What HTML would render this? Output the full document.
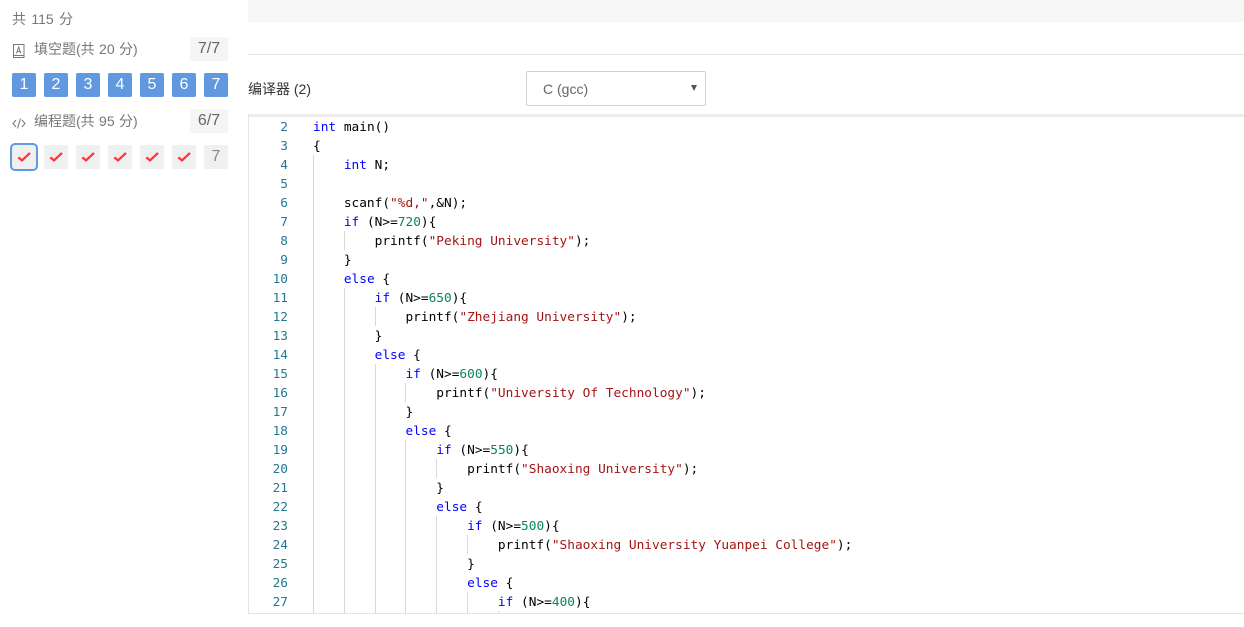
<!DOCTYPE html>
<html lang="zh"><head><meta charset="utf-8"><title>编程题</title>
<style>
html,body{margin:0;padding:0;background:#fff}
body{position:relative;width:1244px;height:627px;overflow:hidden;font-family:"Liberation Sans","Noto Sans CJK SC",sans-serif;font-size:14px;color:#777}
.a{position:absolute}
.t{position:absolute;white-space:nowrap;line-height:20px}
.chip{position:absolute;left:190px;width:38px;height:24px;background:#f5f5f5;border-radius:2px;text-align:center;line-height:24px;font-size:16px;color:#666}
.tile{position:absolute;width:24px;height:24px;border-radius:2px;text-align:center;line-height:24px;font-size:16px}
.b{background:#6199e0;color:#fff;top:73px}
.g{background:#f0f0f0;color:#888;top:145px}
.tile svg{position:absolute;left:5px;top:5px}
.guide{position:absolute;width:1px;background:#d8d8d8}
.ln{position:absolute;left:250px;width:38px;margin-top:1px;text-align:right;height:19px;font:12.8px/19px "DejaVu Sans Mono",monospace;color:#237893}
.c{position:absolute;left:313px;margin-top:1px;white-space:pre;font:12.8px/19px "DejaVu Sans Mono",monospace;color:#000}
.k{color:#00f}.s{color:#a31515}.n{color:#098658}
</style></head><body>
<div class="t" style="left:12px;top:9px;word-spacing:1.5px">共 115 分</div>

<svg class="a" style="left:12px;top:43px" width="14" height="16" viewBox="0 0 14 16" fill="none" stroke="#777" stroke-width="1"><path d="M1.500 1.500h10.500v13h-10.500z"/><path d="M1.500 12.500h10.500"/><path d="M4.500 10.500l2.200-6.500l2.200 6.500M5.300 8.500h2.800"/></svg>
<div class="t" style="left:34px;top:39px;word-spacing:.5px">填空题(共 20 分)</div>
<div class="chip" style="top:37px">7/7</div>

<div class="tile b" style="left:12px">1</div>
<div class="tile b" style="left:44px">2</div>
<div class="tile b" style="left:76px">3</div>
<div class="tile b" style="left:108px">4</div>
<div class="tile b" style="left:140px">5</div>
<div class="tile b" style="left:172px">6</div>
<div class="tile b" style="left:204px">7</div>

<svg class="a" style="left:12px;top:116px" width="14" height="14" viewBox="0 0 14 14" fill="none" stroke="#777" stroke-width="1"><path d="M4 4L1 7.500l3 3.500M10 4l3 3.500l-3 3.500M8.500 2.500L5.500 12.500"/></svg>
<div class="t" style="left:34px;top:111px;word-spacing:.5px">编程题(共 95 分)</div>
<div class="chip" style="top:109px">6/7</div>

<div class="tile g" style="left:12px;box-shadow:0 0 0 2px #6199e0;border-radius:3px"><svg width="14" height="14" viewBox="0 0 14 14" fill="none" stroke="#f33" stroke-width="2.200"><path d="M1.300 7.300L5 10.400L13 2.900"/></svg></div>
<div class="tile g" style="left:44px"><svg width="14" height="14" viewBox="0 0 14 14" fill="none" stroke="#f33" stroke-width="2.200"><path d="M1.300 7.300L5 10.400L13 2.900"/></svg></div>
<div class="tile g" style="left:76px"><svg width="14" height="14" viewBox="0 0 14 14" fill="none" stroke="#f33" stroke-width="2.200"><path d="M1.300 7.300L5 10.400L13 2.900"/></svg></div>
<div class="tile g" style="left:108px"><svg width="14" height="14" viewBox="0 0 14 14" fill="none" stroke="#f33" stroke-width="2.200"><path d="M1.300 7.300L5 10.400L13 2.900"/></svg></div>
<div class="tile g" style="left:140px"><svg width="14" height="14" viewBox="0 0 14 14" fill="none" stroke="#f33" stroke-width="2.200"><path d="M1.300 7.300L5 10.400L13 2.900"/></svg></div>
<div class="tile g" style="left:172px"><svg width="14" height="14" viewBox="0 0 14 14" fill="none" stroke="#f33" stroke-width="2.200"><path d="M1.300 7.300L5 10.400L13 2.900"/></svg></div>
<div class="tile g" style="left:204px">7</div>

<div class="a" style="left:248px;top:0;width:996px;height:22px;background:#f7f7f7"></div>
<div class="a" style="left:248px;top:54px;width:996px;height:1px;background:#e4e4e4"></div>
<div class="t" style="left:248px;top:79px;color:#333">编译器 (2)</div>
<div class="a" style="left:526px;top:71px;width:178px;height:33px;border:1px solid #ccd0d8;border-radius:2px"></div>
<div class="t" style="left:543px;top:79px;color:#666">C (gcc)</div>
<div class="a" style="left:691px;top:85px;width:0;height:0;border-left:3.500px solid transparent;border-right:3.500px solid transparent;border-top:6px solid #555"></div>

<div class="a" style="left:248px;top:114px;width:996px;height:3px;background:#ececec"></div>
<div class="a" style="left:248px;top:114px;width:1px;height:500px;background:#e4e4e4"></div>
<div class="a" style="left:248px;top:613px;width:996px;height:1px;background:#e4e4e4"></div>

<div class="guide" style="left:313px;top:155px;height:458px"></div>
<div class="guide" style="left:344px;top:231px;height:19px"></div>
<div class="guide" style="left:344px;top:288px;height:325px"></div>
<div class="guide" style="left:375px;top:307px;height:19px"></div>
<div class="guide" style="left:375px;top:364px;height:249px"></div>
<div class="guide" style="left:405px;top:383px;height:19px"></div>
<div class="guide" style="left:405px;top:440px;height:173px"></div>
<div class="guide" style="left:436px;top:459px;height:19px"></div>
<div class="guide" style="left:436px;top:516px;height:97px"></div>
<div class="guide" style="left:467px;top:535px;height:19px"></div>
<div class="guide" style="left:467px;top:592px;height:21px"></div>
<div class="guide" style="left:498px;top:611px;height:2px"></div>

<div class="ln" style="top:117px">2</div><div class="c" style="top:117px"><span class="k">int</span> main()</div>
<div class="ln" style="top:136px">3</div><div class="c" style="top:136px">{</div>
<div class="ln" style="top:155px">4</div><div class="c" style="top:155px">    <span class="k">int</span> N;</div>
<div class="ln" style="top:174px">5</div>
<div class="ln" style="top:193px">6</div><div class="c" style="top:193px">    scanf(<span class="s">"%d,"</span>,&amp;N);</div>
<div class="ln" style="top:212px">7</div><div class="c" style="top:212px">    <span class="k">if</span> (N&gt;=<span class="n">720</span>){</div>
<div class="ln" style="top:231px">8</div><div class="c" style="top:231px">        printf(<span class="s">"Peking University"</span>);</div>
<div class="ln" style="top:250px">9</div><div class="c" style="top:250px">    }</div>
<div class="ln" style="top:269px">10</div><div class="c" style="top:269px">    <span class="k">else</span> {</div>
<div class="ln" style="top:288px">11</div><div class="c" style="top:288px">        <span class="k">if</span> (N&gt;=<span class="n">650</span>){</div>
<div class="ln" style="top:307px">12</div><div class="c" style="top:307px">            printf(<span class="s">"Zhejiang University"</span>);</div>
<div class="ln" style="top:326px">13</div><div class="c" style="top:326px">        }</div>
<div class="ln" style="top:345px">14</div><div class="c" style="top:345px">        <span class="k">else</span> {</div>
<div class="ln" style="top:364px">15</div><div class="c" style="top:364px">            <span class="k">if</span> (N&gt;=<span class="n">600</span>){</div>
<div class="ln" style="top:383px">16</div><div class="c" style="top:383px">                printf(<span class="s">"University Of Technology"</span>);</div>
<div class="ln" style="top:402px">17</div><div class="c" style="top:402px">            }</div>
<div class="ln" style="top:421px">18</div><div class="c" style="top:421px">            <span class="k">else</span> {</div>
<div class="ln" style="top:440px">19</div><div class="c" style="top:440px">                <span class="k">if</span> (N&gt;=<span class="n">550</span>){</div>
<div class="ln" style="top:459px">20</div><div class="c" style="top:459px">                    printf(<span class="s">"Shaoxing University"</span>);</div>
<div class="ln" style="top:478px">21</div><div class="c" style="top:478px">                }</div>
<div class="ln" style="top:497px">22</div><div class="c" style="top:497px">                <span class="k">else</span> {</div>
<div class="ln" style="top:516px">23</div><div class="c" style="top:516px">                    <span class="k">if</span> (N&gt;=<span class="n">500</span>){</div>
<div class="ln" style="top:535px">24</div><div class="c" style="top:535px">                        printf(<span class="s">"Shaoxing University Yuanpei College"</span>);</div>
<div class="ln" style="top:554px">25</div><div class="c" style="top:554px">                    }</div>
<div class="ln" style="top:573px">26</div><div class="c" style="top:573px">                    <span class="k">else</span> {</div>
<div class="ln" style="top:592px">27</div><div class="c" style="top:592px">                        <span class="k">if</span> (N&gt;=<span class="n">400</span>){</div>
</body></html>
